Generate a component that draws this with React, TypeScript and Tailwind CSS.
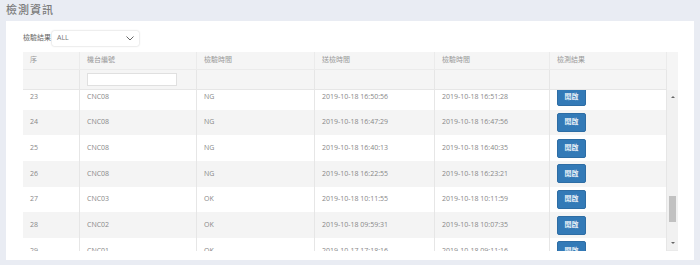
const rows = [
  { no: 23, machine: "CNC08", result: "NG", sent: "2019-10-18 16:50:56", checked: "2019-10-18 16:51:28" },
  { no: 24, machine: "CNC08", result: "NG", sent: "2019-10-18 16:47:29", checked: "2019-10-18 16:47:56" },
  { no: 25, machine: "CNC08", result: "NG", sent: "2019-10-18 16:40:13", checked: "2019-10-18 16:40:35" },
  { no: 26, machine: "CNC08", result: "NG", sent: "2019-10-18 16:22:55", checked: "2019-10-18 16:23:21" },
  { no: 27, machine: "CNC03", result: "OK", sent: "2019-10-18 10:11:55", checked: "2019-10-18 10:11:59" },
  { no: 28, machine: "CNC02", result: "OK", sent: "2019-10-18 09:59:31", checked: "2019-10-18 10:07:35" },
  { no: 29, machine: "CNC01", result: "OK", sent: "2019-10-17 17:18:16", checked: "2019-10-18 09:11:16" },
];

const cols = "grid grid-cols-[57px_117px_118px_120px_115px_117px]";
const cell = "px-[7px] flex items-center border-r border-[#e6e6e6]";

export default function App() {
  return (
    <div
      className="w-[700px] h-[265px] bg-[#e9ecf3] px-[6px] pt-[1px] overflow-hidden text-[#888]"
      style={{ fontFamily: '"Open Sans", "Noto Sans CJK TC", sans-serif' }}
    >
      {/* Title */}
      <h1 className="text-[11px] leading-[18px] font-medium text-[#7a7a7a] tracking-[1px]">檢測資訊</h1>

      {/* Card */}
      <div className="mt-[2px] bg-white h-[239px] pl-[17px] pr-[16px] pt-[10px]">
        <div className="flex items-center h-[15px] text-[7px] text-[#666]">
          <span>檢驗結果</span>
          <div className="ml-[1px] w-[87px] h-[15px] bg-white shadow-[0_0_2px_rgba(0,0,0,0.25)] rounded-[2px] flex items-center justify-between px-[5px]">
            <span className="text-[#777]">ALL</span>
            <svg width="8" height="5" viewBox="0 0 8 5" fill="none" stroke="#666" strokeWidth="1">
              <path d="M0.5 0.5 L4 4 L7.5 0.5" />
            </svg>
          </div>
        </div>

        {/* Table */}
        <div className="mt-[6px] w-[655px] text-[7px]">
          {/* Header */}
          <div className="flex bg-[#f5f5f5] text-[#999]">
            <div className={cols}>
              {["序", "機台編號", "檢驗時間", "送檢時間", "檢驗時間", "檢測結果"].map((h, i) => (
                <div key={i} className={`${cell} h-[18px] border-b border-[#ebebeb]`}>
                  {h}
                </div>
              ))}
              {[0, 1, 2, 3, 4, 5].map((i) => (
                <div key={i} className={`${cell} h-[20px] border-b border-[#e3e3e3]`}>
                  {i === 1 && <div className="w-[90px] h-[13px] bg-white border border-[#e0e0e0]" />}
                </div>
              ))}
            </div>
            <div className="w-[11px]" />
          </div>

          {/* Body */}
          <div className="flex h-[161px] border-b border-[#eaeaea]">
            <div className="overflow-hidden h-[161px]">
              <div className="-mt-[6px]">
                {rows.map((r, i) => (
                  <div key={r.no} className={`${cols} h-[25.7px] ${i % 2 ? "bg-[#f4f4f4]" : "bg-white"}`}>
                    <div className={cell}>{r.no}</div>
                    <div className={cell}>{r.machine}</div>
                    <div className={cell}>{r.result}</div>
                    <div className={cell}>{r.sent}</div>
                    <div className={cell}>{r.checked}</div>
                    <div className={cell}>
                      <button className="w-[29px] h-[19px] bg-[#337ab7] border border-[#2e6da4] rounded-[2px] text-white text-[7px] font-medium">
                        開啟
                      </button>
                    </div>
                  </div>
                ))}
              </div>
            </div>
            {/* Scrollbar */}
            <div className="w-[11px] bg-[#f1f1f1] flex flex-col items-center justify-between py-[6px]">
              <svg width="4" height="2" viewBox="0 0 4 2">
                <path d="M0 2 L2 0 L4 2 Z" fill="#666" />
              </svg>
              <div className="flex-1 w-full flex flex-col items-center pt-[98px]">
                <div className="w-[7px] h-[26px] bg-[#c1c1c1]" />
              </div>
              <svg width="4" height="2" viewBox="0 0 4 2">
                <path d="M0 0 L4 0 L2 2 Z" fill="#666" />
              </svg>
            </div>
          </div>
        </div>
      </div>
    </div>
  );
}
